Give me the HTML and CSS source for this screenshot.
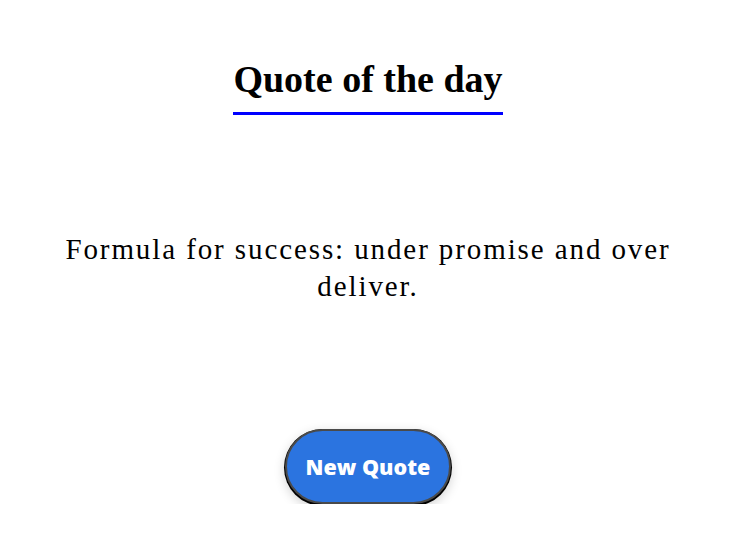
FILE: index.html
```html
<!DOCTYPE html>
<html>
<head>
<meta charset="utf-8">
<link rel="stylesheet" href="styles.css">
</head>
<body>
<main class="page">
  <header class="heading"><h1 class="title">Quote of the day</h1></header>
  <p class="quote">Formula for success: under promise and over deliver.</p>
  <button class="btn">New Quote</button>
</main>
</body>
</html>
```
FILE: styles.css
```css
html, body { margin: 0; padding: 0; background: #fff; }
.page {
  width: 736px;
  display: flex;
  flex-direction: column;
  align-items: center;
}
.heading { padding-top: 56px; }
.title {
  margin: 0;
  font-family: "Liberation Serif", serif;
  font-weight: bold;
  font-size: 38px;
  line-height: 46px;
  color: #000;
  padding-bottom: 10px;
  border-bottom: 3px solid #0000ff;
}
.quote {
  margin: 116px 0 0;
  width: 640px;
  text-align: center;
  font-family: "Liberation Serif", serif;
  font-size: 29px;
  letter-spacing: 1.9px;
  line-height: 37px;
  color: #000;
}
.btn {
  margin-top: 124px;
  width: 166px;
  height: 75px;
  border-radius: 38px;
  border: 2px solid #4a4a4a;
  background: #2b74e0;
  color: #fff;
  font-family: "Open Sans", sans-serif;
  font-weight: 800;
  font-size: 21.5px;
  box-shadow: 0 1px 0 1px #000, 0 4px 12px rgba(0,0,0,0.2);
}
```
